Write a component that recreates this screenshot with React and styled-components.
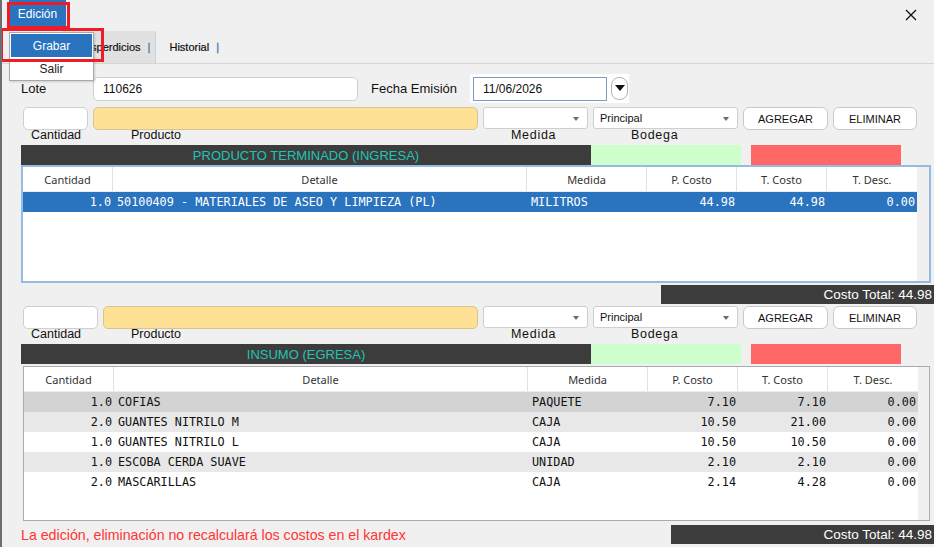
import React from "react";
import styled, { createGlobalStyle } from "styled-components";

const GlobalStyle = createGlobalStyle`
  html, body {
    margin: 0;
    padding: 0;
    background: #f0f0f0;
    overflow: hidden;
  }
  body {
    font-family: "Liberation Sans", Arial, sans-serif;
    color: #111;
  }
`;

const insumos = [
  { cant: "1.0", det: "COFIAS", med: "PAQUETE", pc: "7.10", tc: "7.10", td: "0.00" },
  { cant: "2.0", det: "GUANTES NITRILO M", med: "CAJA", pc: "10.50", tc: "21.00", td: "0.00" },
  { cant: "1.0", det: "GUANTES NITRILO L", med: "CAJA", pc: "10.50", tc: "10.50", td: "0.00" },
  { cant: "1.0", det: "ESCOBA CERDA SUAVE", med: "UNIDAD", pc: "2.10", tc: "2.10", td: "0.00" },
  { cant: "2.0", det: "MASCARILLAS", med: "CAJA", pc: "2.14", tc: "4.28", td: "0.00" },
];

const terminado = [
  {
    cant: "1.0",
    det: "50100409 - MATERIALES DE ASEO Y LIMPIEZA (PL)",
    med: "MILITROS",
    pc: "44.98",
    tc: "44.98",
    td: "0.00",
  },
];

const rowShade = ["#d3d3d3", "#e8e8e8", "#ffffff", "#e8e8e8", "#ffffff"];

const Combo = ({ value, width }) => (
  <ComboBox $w={width}>
    <span>{value}</span>
    <Caret>▼</Caret>
  </ComboBox>
);

const Table = ({ rows, height, selected, accent }) => (
  <TableBox $h={height} $accent={accent}>
    <TableMain>
      <HeadRow>
        <HeadCell $w={90}>Cantidad</HeadCell>
        <HeadCell $w={414}>Detalle</HeadCell>
        <HeadCell $w={120}>Medida</HeadCell>
        <HeadCell $w={90}>P. Costo</HeadCell>
        <HeadCell $w={90}>T. Costo</HeadCell>
        <HeadCell $w={90} $last>T. Desc.</HeadCell>
      </HeadRow>
      {rows.map((r, i) => (
        <DataRow key={i} $bg={selected ? "#2a73bf" : rowShade[i]} $sel={selected}>
          <DataCell $w={90} $right>{r.cant}</DataCell>
          <DataCell $w={414}>{r.det}</DataCell>
          <DataCell $w={120}>{r.med}</DataCell>
          <DataCell $w={90} $right>{r.pc}</DataCell>
          <DataCell $w={90} $right>{r.tc}</DataCell>
          <DataCell $w={90} $right>{r.td}</DataCell>
        </DataRow>
      ))}
    </TableMain>
    <ScrollTrack />
  </TableBox>
);

const Section = ({ cantWidth, prodWidth, title, rows, tableHeight, selected, accent, gapTop }) => (
  <>
    <InputRow $mt={gapTop}>
      <TextField $w={cantWidth} />
      <TextField $w={prodWidth} $yellow />
      <Combo value="" width={105} />
      <Combo value="Principal" width={145} />
      <Btn $w={85}>AGREGAR</Btn>
      <Btn $w={84}>ELIMINAR</Btn>
    </InputRow>
    <LabelRow>
      <FieldLabel $w={110} $pl={10}>Cantidad</FieldLabel>
      <FieldLabel $w={380}>Producto</FieldLabel>
      <FieldLabel $w={120} $spaced>Medida</FieldLabel>
      <FieldLabel $w={100} $spaced>Bodega</FieldLabel>
    </LabelRow>
    <TitleBar>
      <TitleDark>{title}</TitleDark>
      <TitleSwatch $bg="#ccffcc" />
      <TitleSwatch $bg="#ff6666" $ml={10} />
    </TitleBar>
    <Table rows={rows} height={tableHeight} selected={selected} accent={accent} />
  </>
);

export default function App() {
  return (
    <Window>
      <GlobalStyle />
      <MenuBar>
        <MenuButton>Edición</MenuButton>
        <CloseBtn>
          <svg width="12" height="12" viewBox="0 0 12 12">
            <path d="M1 1 L11 11 M11 1 L1 11" stroke="#111" strokeWidth="1.3" />
          </svg>
        </CloseBtn>
      </MenuBar>
      <TabBar>
        <Tab $active>
          Desperdicios <Sep>|</Sep>
        </Tab>
        <Tab>
          Historial <Sep>|</Sep>
        </Tab>
      </TabBar>

      <Content>
        <LoteRow>
          <PlainLabel $w={72}>Lote</PlainLabel>
          <TextField $w={265} $h={24}>110626</TextField>
          <PlainLabel $w={99} $ml={13}>Fecha Emisión</PlainLabel>
          <DateWrap>
            <DateInput>11/06/2026</DateInput>
            <DateBtn>
              <svg width="10" height="7" viewBox="0 0 10 7">
                <path d="M0 0 L10 0 L5 6 Z" fill="#111" />
              </svg>
            </DateBtn>
          </DateWrap>
        </LoteRow>

        <Section
          gapTop={4}
          cantWidth={65}
          prodWidth={385}
          title="PRODUCTO TERMINADO (INGRESA)"
          rows={terminado}
          tableHeight={118}
          selected
          accent
        />
        <TotalBar $w={273} $mt={2}>Costo Total: 44.98</TotalBar>

        <Section
          gapTop={2}
          cantWidth={75}
          prodWidth={375}
          title="INSUMO (EGRESA)"
          rows={insumos}
          tableHeight={155}
        />
        <Footer>
          <Warning>La edición, eliminación no recalculará los costos en el kardex</Warning>
          <TotalBar $w={263}>Costo Total: 44.98</TotalBar>
        </Footer>
      </Content>

      <DropMenu>
        <DropItem $active>Grabar</DropItem>
        <DropItem>Salir</DropItem>
      </DropMenu>
      <Highlight $l={7} $t={2} $w={63} $h={27} />
      <Highlight $l={0} $t={28} $w={104} $h={34} />
    </Window>
  );
}

const Window = styled.div`
  position: relative;
  width: 932px;
  height: 547px;
  border-left: 2px solid #6e6e6e;
  background: #f0f0f0;
  overflow: hidden;
`;

const MenuBar = styled.div`
  height: 31px;
  display: flex;
  align-items: flex-start;
  justify-content: space-between;
`;

const MenuButton = styled.div`
  margin-left: 7px;
  width: 57px;
  height: 27px;
  background: #2a73bf;
  color: #fff;
  font-size: 12px;
  display: flex;
  align-items: center;
  justify-content: center;
`;

const CloseBtn = styled.div`
  width: 30px;
  height: 30px;
  margin-right: 8px;
  display: flex;
  align-items: center;
  justify-content: center;
`;

const TabBar = styled.div`
  height: 32px;
  display: flex;
  padding-left: 60px;
  border-bottom: 1px solid #d6d6d6;
`;

const Tab = styled.div`
  display: flex;
  align-items: center;
  padding: ${(p) => (p.$active ? "0 5px 0 15px" : "0 6px 0 13px")};
  font-size: 11px;
  color: #111;
  -webkit-text-stroke: 0.2px #111;
  background: ${(p) => (p.$active ? "#e1e1e1" : "transparent")};
  border-right: ${(p) => (p.$active ? "1px solid #d0d0d0" : "none")};
`;

const Sep = styled.span`
  margin-left: 7px;
  color: #3f78b3;
  -webkit-text-stroke: 0.3px #3f78b3;
`;

const Content = styled.div`
  padding: 10px 0 0 19px;
  display: flex;
  flex-direction: column;
`;

const LoteRow = styled.div`
  height: 29px;
  display: flex;
  align-items: center;
`;

const PlainLabel = styled.div`
  width: ${(p) => p.$w}px;
  margin-left: ${(p) => p.$ml || 0}px;
  font-size: 13px;
  color: #111;
`;

const TextField = styled.div`
  box-sizing: border-box;
  width: ${(p) => p.$w}px;
  height: ${(p) => p.$h || 23}px;
  background: ${(p) => (p.$yellow ? "#ffe195" : "#fff")};
  border: 1px solid ${(p) => (p.$yellow ? "#d8c48e" : "#cfcfcf")};
  border-radius: 5px;
  padding-left: 9px;
  font-size: 12px;
  display: flex;
  align-items: center;
`;

const DateWrap = styled.div`
  display: flex;
  align-items: center;
  gap: 4px;
  background: #fff;
  height: 29px;
  padding: 0 1px 0 3px;
`;

const DateInput = styled.div`
  box-sizing: border-box;
  width: 134px;
  height: 24px;
  border: 1px solid #7c9cc4;
  padding-left: 9px;
  font-size: 12px;
  display: flex;
  align-items: center;
`;

const DateBtn = styled.div`
  box-sizing: border-box;
  width: 17px;
  height: 23px;
  border: 1px solid #b5b5b5;
  border-radius: 8px;
  display: flex;
  align-items: center;
  justify-content: center;
`;

const InputRow = styled.div`
  margin-top: ${(p) => p.$mt}px;
  padding-left: 2px;
  height: 23px;
  display: flex;
  gap: 5px;
`;

const ComboBox = styled.div`
  box-sizing: border-box;
  width: ${(p) => p.$w}px;
  height: 22px;
  background: #fff;
  border: 1px solid #cfcfcf;
  border-radius: 3px;
  padding: 0 6px 0 6px;
  font-size: 11px;
  display: flex;
  align-items: center;
  justify-content: space-between;
`;

const Caret = styled.span`
  font-size: 10px;
  transform: scaleY(0.7);
  color: #6a6a6a;
`;

const Btn = styled.div`
  box-sizing: border-box;
  width: ${(p) => p.$w}px;
  height: 23px;
  background: #fff;
  border: 1px solid #c9c9c9;
  border-radius: 6px;
  font-size: 11px;
  display: flex;
  align-items: center;
  justify-content: center;
`;

const LabelRow = styled.div`
  height: 15px;
  display: flex;
  align-items: flex-start;
  line-height: 11px;
`;

const FieldLabel = styled.div`
  width: ${(p) => p.$w}px;
  padding-left: ${(p) => p.$pl || 0}px;
  box-sizing: border-box;
  font-size: 12.5px;
  letter-spacing: ${(p) => (p.$spaced ? "0.7px" : "0")};
`;

const TitleBar = styled.div`
  height: 20px;
  display: flex;
`;

const TitleDark = styled.div`
  width: 570px;
  background: #3c3c3c;
  color: #1fc4b4;
  font-size: 13px;
  display: flex;
  align-items: center;
  justify-content: center;
`;

const TitleSwatch = styled.div`
  width: 150px;
  margin-left: ${(p) => p.$ml || 0}px;
  background: ${(p) => p.$bg};
`;

const TableBox = styled.div`
  box-sizing: border-box;
  height: ${(p) => p.$h}px;
  width: ${(p) => (p.$accent ? 910 : 907)}px;
  margin-left: ${(p) => (p.$accent ? 0 : 2)}px;
  margin-top: ${(p) => (p.$accent ? 0 : 2)}px;
  border: ${(p) => (p.$accent ? "2px solid #93bbe4" : "1px solid #aaaaaa")};
  background: #fff;
  display: flex;
`;

const TableMain = styled.div`
  flex: 1;
  display: flex;
  flex-direction: column;
`;

const ScrollTrack = styled.div`
  width: 12px;
  background: #f0f0f0;
`;

const HeadRow = styled.div`
  height: 25px;
  display: flex;
  border-bottom: 1px solid #ececec;
  box-sizing: border-box;
`;

const HeadCell = styled.div`
  width: ${(p) => p.$w}px;
  box-sizing: border-box;
  border-right: ${(p) => (p.$last ? "none" : "1px solid #e2e2e2")};
  font-family: "Noto Sans", sans-serif;
  font-size: 11px;
  color: #333;
  display: flex;
  align-items: center;
  justify-content: center;
`;

const DataRow = styled.div`
  height: 20px;
  display: flex;
  background: ${(p) => p.$bg};
  color: ${(p) => (p.$sel ? "#fff" : "#111")};
`;

const DataCell = styled.div`
  width: ${(p) => p.$w}px;
  box-sizing: border-box;
  padding: ${(p) => (p.$right ? "0 2px 0 0" : "0 0 0 4px")};
  font-family: "DejaVu Sans Mono", "Liberation Mono", monospace;
  font-size: 11.8px;
  white-space: pre;
  display: flex;
  align-items: center;
  justify-content: ${(p) => (p.$right ? "flex-end" : "flex-start")};
`;

const TotalBar = styled.div`
  align-self: flex-end;
  width: ${(p) => p.$w}px;
  height: 19px;
  margin-top: ${(p) => p.$mt || 0}px;
  background: #3c3c3c;
  color: #fff;
  font-size: 13.5px;
  display: flex;
  align-items: center;
  justify-content: flex-end;
  padding-right: 2px;
  box-sizing: border-box;
`;

const Footer = styled.div`
  margin-top: 3px;
  height: 20px;
  display: flex;
  align-items: flex-end;
  justify-content: space-between;
`;

const Warning = styled.div`
  color: #ff3535;
  font-size: 14.2px;
  line-height: 17px;
`;

const DropMenu = styled.div`
  position: absolute;
  left: 7px;
  top: 32px;
  width: 85px;
  height: 49px;
  box-sizing: border-box;
  background: #fff;
  border: 1px solid #a8a8a8;
  box-shadow: 1px 1px 2px rgba(0, 0, 0, 0.15);
  padding: 1px;
`;

const DropItem = styled.div`
  height: 23px;
  background: ${(p) => (p.$active ? "#2a73bf" : "transparent")};
  color: ${(p) => (p.$active ? "#fff" : "#222")};
  font-size: 12px;
  display: flex;
  align-items: center;
  justify-content: center;
`;

const Highlight = styled.div`
  position: absolute;
  left: ${(p) => p.$l - 2}px;
  top: ${(p) => p.$t}px;
  width: ${(p) => p.$w}px;
  height: ${(p) => p.$h}px;
  box-sizing: border-box;
  border: 3px solid #ee1c25;
  pointer-events: none;
`;
